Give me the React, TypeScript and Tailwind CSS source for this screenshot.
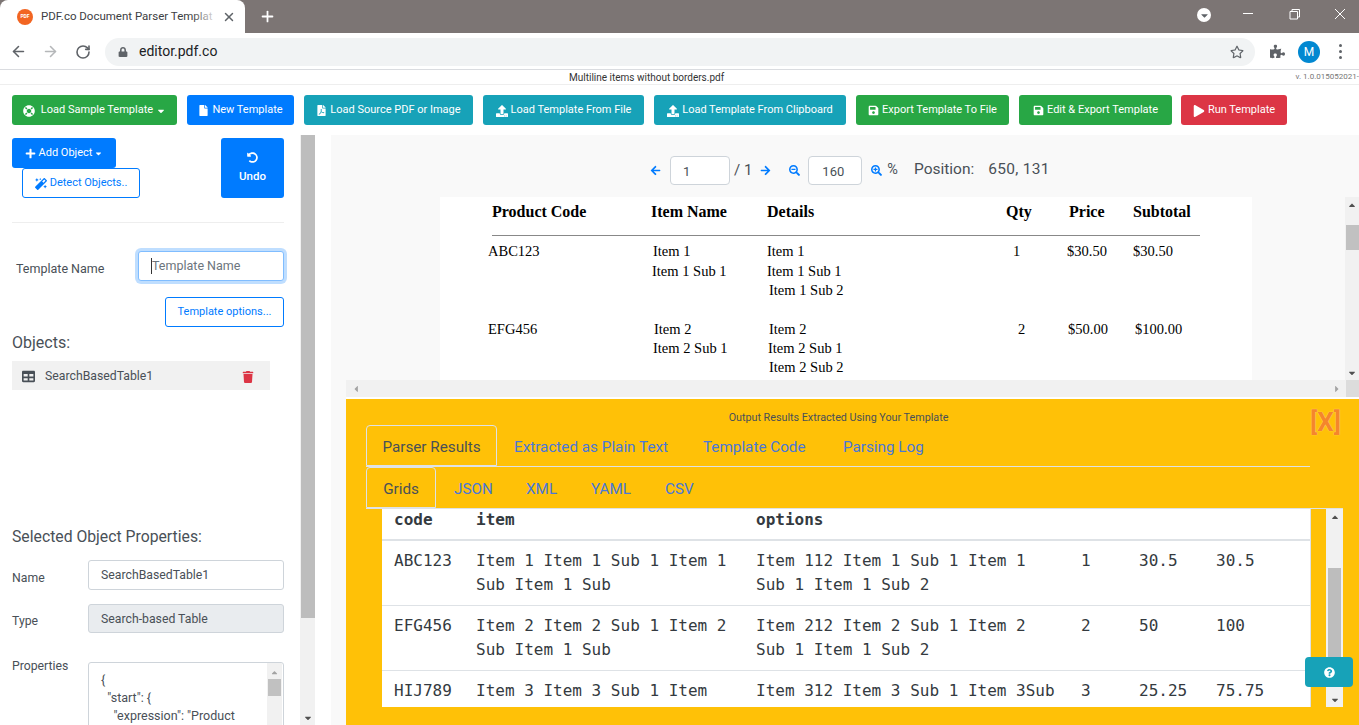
import {
  FaFile,
  FaFilePdf,
  FaLifeRing,
  FaMagic,
  FaPlay,
  FaPlus,
  FaPuzzlePiece,
  FaQuestionCircle,
  FaRegStar,
  FaSave,
  FaSearchMinus,
  FaSearchPlus,
  FaTable,
  FaTrash,
  FaUndoAlt,
  FaUpload,
  FaArrowLeft,
  FaArrowRight,
  FaLock,
  FaCaretDown,
  FaCaretUp,
  FaCaretLeft,
  FaCaretRight,
} from 'react-icons/fa';
import { ArrowLeft, ArrowRight, Plus, RotateCw, X } from 'lucide-react';
import type { ReactNode } from 'react';

const GREEN = 'bg-[#28a745]';
const BLUE = 'bg-[#007bff]';
const TEAL = 'bg-[#17a2b8]';
const RED = 'bg-[#dc3545]';

const toolbarButtons: { label: string; icon: ReactNode; color: string; width: string; caret?: boolean }[] = [
  { label: 'Load Sample Template', icon: <FaLifeRing className="mr-[6px] text-[12px]" />, color: GREEN, width: 'w-[165px]', caret: true },
  { label: 'New Template', icon: <FaFile className="mr-[3px] text-[11px]" />, color: BLUE, width: 'w-[107px]' },
  { label: 'Load Source PDF or Image', icon: <FaFilePdf className="mr-[3px] text-[11px]" />, color: TEAL, width: 'w-[169px]' },
  { label: 'Load Template From File', icon: <FaUpload className="mr-[3px] text-[12px]" />, color: TEAL, width: 'w-[161px]' },
  { label: 'Load Template From Clipboard', icon: <FaUpload className="mr-[3px] text-[12px]" />, color: TEAL, width: 'w-[192px]' },
  { label: 'Export Template To File', icon: <FaSave className="mr-[3px] text-[11px]" />, color: GREEN, width: 'w-[153px]' },
  { label: 'Edit & Export Template', icon: <FaSave className="mr-[3px] text-[11px]" />, color: GREEN, width: 'w-[153px]' },
  { label: 'Run Template', icon: <FaPlay className="mr-[3px] text-[12px]" />, color: RED, width: 'w-[106px]' },
];

// text sits at fixed spots on the rendered PDF page
const pdfHeader = [
  { text: 'Product Code', pos: 'left-[52px] top-[7px]' },
  { text: 'Item Name', pos: 'left-[211px] top-[7px]' },
  { text: 'Details', pos: 'left-[327px] top-[7px]' },
  { text: 'Qty', pos: 'left-[566px] top-[7px]' },
  { text: 'Price', pos: 'left-[629px] top-[7px]' },
  { text: 'Subtotal', pos: 'left-[693px] top-[7px]' },
];

const pdfCells = [
  { text: 'ABC123', pos: 'left-[48px] top-[46px]' },
  { text: 'Item 1', pos: 'left-[213px] top-[46px]' },
  { text: 'Item 1 Sub 1', pos: 'left-[212px] top-[66px]' },
  { text: 'Item 1', pos: 'left-[327px] top-[46px]' },
  { text: 'Item 1 Sub 1', pos: 'left-[327px] top-[66px]' },
  { text: 'Item 1 Sub 2', pos: 'left-[329px] top-[85px]' },
  { text: '1', pos: 'left-[573px] top-[46px]' },
  { text: '$30.50', pos: 'left-[627px] top-[46px]' },
  { text: '$30.50', pos: 'left-[693px] top-[46px]' },
  { text: 'EFG456', pos: 'left-[48px] top-[124px]' },
  { text: 'Item 2', pos: 'left-[214px] top-[124px]' },
  { text: 'Item 2 Sub 1', pos: 'left-[213px] top-[143px]' },
  { text: 'Item 2', pos: 'left-[329px] top-[124px]' },
  { text: 'Item 2 Sub 1', pos: 'left-[328px] top-[143px]' },
  { text: 'Item 2 Sub 2', pos: 'left-[329px] top-[162px]' },
  { text: '2', pos: 'left-[578px] top-[124px]' },
  { text: '$50.00', pos: 'left-[628px] top-[124px]' },
  { text: '$100.00', pos: 'left-[695px] top-[124px]' },
];

const gridRows = [
  { code: 'ABC123', item: ['Item 1 Item 1 Sub 1 Item 1', 'Sub Item 1 Sub'], options: ['Item 112 Item 1 Sub 1 Item 1', 'Sub 1 Item 1 Sub 2'], qty: '1', price: '30.5', total: '30.5' },
  { code: 'EFG456', item: ['Item 2 Item 2 Sub 1 Item 2', 'Sub Item 1 Sub'], options: ['Item 212 Item 2 Sub 1 Item 2', 'Sub 1 Item 1 Sub 2'], qty: '2', price: '50', total: '100' },
  { code: 'HIJ789', item: ['Item 3 Item 3 Sub 1 Item'], options: ['Item 312 Item 3 Sub 1 Item 3Sub'], qty: '3', price: '25.25', total: '75.75' },
];

const BrowserChrome = () => (
  <div className="shrink-0">
    <div className="relative flex h-[33px] items-end bg-[#7c7574]">
      <div className="relative flex h-[33px] w-[245px] items-center rounded-t-[8px] bg-white pl-[17px] pr-[9px]">
        <div className="flex h-4 w-4 shrink-0 items-center justify-center rounded-full bg-[#f26522] text-[5px] font-bold text-white">
          PDF
        </div>
        <span className="ml-2 w-[177px] text-[11.5px] whitespace-nowrap text-[#3c4043]">
          PDF.co Document Parser Templat
        </span>
        <div className="absolute top-0 left-[192px] h-full w-[26px] bg-gradient-to-r from-white/0 to-white" />
        <X className="ml-1 h-[14px] w-[14px] text-[#5f6368]" strokeWidth={2.5} />
      </div>
      <Plus className="ml-[14px] mb-[8px] h-[17px] w-[17px] text-white" strokeWidth={2.5} />
      <div className="absolute top-2 left-[1197px] flex h-[14px] w-[14px] items-center justify-center rounded-full bg-white">
        <FaCaretDown className="text-[11px] text-[#5f6368]" />
      </div>
      <svg className="absolute top-[6px] left-[1240px]" width="110" height="20" viewBox="0 0 110 20" fill="none" stroke="#fff" strokeWidth="1">
        <path d="M3 7.5h10" />
        <path d="M50 5.5h7.5v7.5h-7.5zM52 5.5v-2h7.5v7.5h-2" />
        <path d="M95 3l10 10M105 3l-10 10" />
      </svg>
    </div>
    <div className="flex h-[37px] items-center border-b border-[#dadce0] bg-white pt-px">
      <ArrowLeft className="ml-[10px] h-[17px] w-[17px] text-[#5f6368]" strokeWidth={2.2} />
      <ArrowRight className="ml-[15px] h-[17px] w-[17px] text-[#b5b7b9]" strokeWidth={2.2} />
      <RotateCw className="ml-[16px] h-[16px] w-[16px] text-[#5f6368]" strokeWidth={2.4} />
      <div className="ml-[14px] flex h-7 w-[1150px] items-center rounded-full bg-[#f1f3f4] pl-[13px]">
        <FaLock className="text-[10px] text-[#5f6368]" />
        <span className="ml-[11px] text-[14px] text-[#202124]">editor.pdf.co</span>
        <FaRegStar className="mr-[11px] ml-auto text-[14px] text-[#5f6368]" />
      </div>
      <FaPuzzlePiece className="ml-[15px] text-[15px] text-[#5f6368]" />
      <div className="ml-[13px] flex h-[22px] w-[22px] items-center justify-center rounded-full bg-[#0288d1] text-[12px] text-white">
        M
      </div>
      <div className="ml-[19px] flex flex-col gap-[3px]">
        <span className="h-[3px] w-[3px] rounded-full bg-[#5f6368]" />
        <span className="h-[3px] w-[3px] rounded-full bg-[#5f6368]" />
        <span className="h-[3px] w-[3px] rounded-full bg-[#5f6368]" />
      </div>
    </div>
  </div>
);

const Toolbar = () => (
  <div className="flex h-[50px] shrink-0 gap-[10px] px-3 pt-[10px]">
    {toolbarButtons.map((b, i) => (
      <button
        key={b.label}
        className={`flex h-[30px] items-center justify-center rounded-[3px] pt-px whitespace-nowrap text-[11px] text-white ${b.color} ${b.width} ${i === 7 ? '-ml-px' : ''}`}
      >
        {b.icon}
        {b.label}
        {b.caret && <FaCaretDown className="ml-[3px] text-[10px]" />}
      </button>
    ))}
  </div>
);

const Sidebar = () => (
  <div className="relative w-[300px] shrink-0 overflow-hidden text-[#495057]">
    <div className="flex h-[63px] pt-[3px] pl-3">
      <div className="w-[209px]">
        <button className={`flex h-[30px] w-[104px] items-center justify-center rounded-[3px] pt-px text-[11px] text-white ${BLUE}`}>
          <FaPlus className="mr-[3px] text-[11px]" />
          Add Object
          <FaCaretDown className="ml-[2px] text-[9px]" />
        </button>
        <button className="ml-[10px] flex h-[30px] w-[118px] items-center justify-center rounded-[3px] border border-[#007bff] bg-white pt-px text-[11px] text-[#007bff]">
          <FaMagic className="mr-[3px] text-[12px]" />
          Detect Objects..
        </button>
      </div>
      <button className={`flex h-[60px] w-[63px] flex-col items-center justify-center rounded-[3px] pt-[2px] text-[11.5px] font-medium text-white ${BLUE}`}>
        <FaUndoAlt className="mb-[5px] text-[11px]" />
        Undo
      </button>
    </div>
    <div className="mx-3 mt-[24px] h-px w-[272px] bg-[#eeeeee]" />
    <div className="mt-[28px] flex items-center pl-4">
      <span className="w-[122px] pt-[7px] text-[12.5px]">Template Name</span>
      <div className="flex h-[30px] w-[146px] items-center rounded-[3px] border border-[#80bdff] bg-white pl-3 text-[12.5px] text-[#6c757d] shadow-[0_0_0_3px_rgba(0,123,255,0.25)]">
        <span className="h-[16px] w-px bg-[#333]" />
        Template Name
      </div>
    </div>
    <button className="mt-[16px] ml-[165px] flex h-[30px] w-[119px] items-center justify-center rounded-[3px] border border-[#007bff] bg-white pt-px text-[11px] text-[#007bff]">
      Template options...
    </button>
    <div className="mt-[5px] pl-3 text-[16px] leading-[22px]">Objects:</div>
    <div className="mt-[7px] ml-3 flex h-[29px] w-[258px] items-center bg-[#f1f1f1] pt-[2px] pl-[10px] text-[12.25px]">
      <FaTable className="text-[13px] text-[#495057]" />
      <span className="ml-[10px]">SearchBasedTable1</span>
      <FaTrash className="ml-auto mr-[16px] text-[12px] text-[#dc3545]" />
    </div>
    <div className="mt-[136px] pl-3 text-[15.75px] leading-[22px]">Selected Object Properties:</div>
    <div className="mt-[12px] flex items-center pl-3 text-[12.25px]">
      <span className="w-[76px] pt-[6px]">Name</span>
      <div className="flex h-[30px] w-[196px] items-center rounded-[3px] border border-[#ced4da] bg-white pt-px pl-3">SearchBasedTable1</div>
    </div>
    <div className="mt-[14px] flex items-center pl-3 text-[12.25px]">
      <span className="w-[76px] pt-[6px]">Type</span>
      <div className="flex h-[29px] w-[196px] items-center rounded-[3px] border border-[#ced4da] bg-[#e9ecef] pt-[2px] pl-3">Search-based Table</div>
    </div>
    <div className="mt-[29px] flex pl-3 text-[12.25px]">
      <span className="w-[76px] leading-[8px]">Properties</span>
      <div className="relative h-[100px] w-[196px] rounded-[3px] border border-[#ced4da] bg-white pt-[8px] pl-3 text-[12.5px] leading-[18px] whitespace-pre">
        <div>{'{'}</div>
        <div>{'  "start": {'}</div>
        <div>{'    "expression": "Product'}</div>
        <div className="absolute top-0 right-[1px] flex h-full w-[15px] flex-col items-center bg-[#f1f1f1]">
          <FaCaretUp className="mt-[5px] text-[9px] text-[#a3a3a3]" />
          <div className="mt-[2px] h-[17px] w-[13px] bg-[#c1c1c1]" />
        </div>
      </div>
    </div>
  </div>
);

const SidebarScrollbar = () => (
  <div className="flex w-[15px] shrink-0 flex-col items-center bg-[#f1f1f1]">
    <div className="h-[483px] w-[14px] bg-[#bdbdbd]" />
    <FaCaretDown className="mt-auto mb-[2px] text-[10px] text-[#505050]" />
  </div>
);

const PdfPager = () => (
  <div className="flex h-[62px] items-center pt-[8px] pl-[319px] text-[#495057]">
    <FaArrowLeft className="text-[11px] text-[#007bff]" />
    <div className="ml-[9px] flex h-[29px] w-[60px] items-center rounded-[4px] border border-[#ced4da] bg-white pt-[3px] pl-[12px] text-[13px]">1</div>
    <span className="ml-[4px] text-[15px]">/ 1</span>
    <FaArrowRight className="ml-[8px] text-[11px] text-[#007bff]" />
    <FaSearchMinus className="ml-[18px] text-[11px] text-[#007bff]" />
    <div className="ml-[8px] flex h-[29px] w-[54px] items-center rounded-[4px] border border-[#ced4da] bg-white pt-[3px] pl-[13px] text-[13px]">160</div>
    <FaSearchPlus className="ml-[9px] text-[11px] text-[#007bff]" />
    <span className="ml-[5px] text-[14.5px]">%</span>
    <span className="ml-[16px] text-[15.5px]">Position:</span>
    <span className="ml-[14px] text-[15.5px] tracking-[0.3px]">650, 131</span>
  </div>
);

const PdfPage = () => (
  <div className="flex h-[183px]">
    <div className="w-[109px] shrink-0" />
    <div className="relative w-[812px] shrink-0 overflow-hidden bg-white font-['Liberation_Serif',serif] text-[14.5px] leading-[16px] text-black">
      {pdfHeader.map((h) => (
        <span key={h.text} className={`absolute text-[16px] font-bold whitespace-nowrap ${h.pos}`}>
          {h.text}
        </span>
      ))}
      <div className="absolute top-[38px] left-[52px] h-px w-[708px] bg-[#888888]" />
      {pdfCells.map((c) => (
        <span key={c.pos} className={`absolute whitespace-nowrap ${c.pos}`}>
          {c.text}
        </span>
      ))}
    </div>
    <div className="ml-auto flex w-[14px] flex-col items-center bg-[#f1f1f1]">
      <FaCaretUp className="mt-[3px] text-[10px] text-[#505050]" />
      <div className="mt-[15px] h-[25px] w-[13px] bg-[#c1c1c1]" />
      <FaCaretDown className="mt-auto mb-[2px] text-[10px] text-[#505050]" />
    </div>
  </div>
);

const PdfHScroll = () => (
  <div className="flex h-[17px] items-center bg-[#f1f1f1] pl-[5px] text-[#a3a3a3]">
    <FaCaretLeft className="text-[10px]" />
    <FaCaretRight className="mr-[4px] ml-auto text-[10px]" />
    <div className="h-[17px] w-[13px] bg-[#dcdcdc]" />
  </div>
);

const ResultsPanel = () => (
  <div className="relative min-h-0 flex-1 overflow-hidden bg-[#ffc107] pl-5">
    <div className="flex h-[26px] items-end justify-center pr-[48px] text-[10.75px] leading-[14px] text-[#495057]">
      Output Results Extracted Using Your Template
    </div>
    <div className="absolute top-[7px] left-[964px] text-[26px] leading-[32px] font-bold text-[#f5862b] [text-shadow:0_0_1px_#ffe9a8]">
      [X]
    </div>
    <div className="flex h-[42px] w-[944px] border-b border-[#dee2e6] text-[15.25px]">
      <div className="flex h-[41px] w-[131px] items-center justify-center rounded-t-[4px] border border-[#dee2e6] pt-[3px] text-[#495057]">
        Parser Results
      </div>
      <span className="mt-[11px] ml-[17px] w-[189px] text-[#4a78d8]">Extracted as Plain Text</span>
      <span className="mt-[11px] w-[140px] text-[#4a78d8]">Template Code</span>
      <span className="mt-[11px] text-[#4a78d8]">Parsing Log</span>
    </div>
    <div className="flex h-[42px] w-[977px] border-b border-[#dee2e6] text-[15.25px]">
      <div className="flex h-[41px] w-[70px] items-center justify-center rounded-t-[4px] border border-[#dee2e6] pt-[3px] text-[#495057]">
        Grids
      </div>
      <span className="mt-[11px] ml-[18px] w-[72px] text-[#4a78d8]">JSON</span>
      <span className="mt-[11px] w-[65px] text-[#4a78d8]">XML</span>
      <span className="mt-[11px] w-[74px] text-[#4a78d8]">YAML</span>
      <span className="mt-[11px] text-[#4a78d8]">CSV</span>
    </div>
    <div className="flex h-[198px]">
      <div className="ml-[16px] w-[929px] overflow-hidden border-r border-[#dee2e6] bg-white font-['DejaVu_Sans_Mono',monospace] text-[16px] leading-[24px] text-[#343a40]">
        <div className="grid h-[30px] grid-cols-[82px_280px_325px] pt-px pl-3 leading-[20px] font-bold">
          <span>code</span>
          <span>item</span>
          <span>options</span>
        </div>
        {gridRows.map((r, i) => (
          <div
            key={r.code}
            className={`grid grid-cols-[82px_280px_325px_58px_77px_1fr] pt-[8px] pb-[8px] pl-3 ${i === 0 ? 'border-t-2 border-[#dee2e6]' : 'border-t border-[#dee2e6]'}`}
          >
            <span>{r.code}</span>
            <div>
              {r.item.map((line) => (
                <div key={line} className="whitespace-pre">{line}</div>
              ))}
            </div>
            <div>
              {r.options.map((line) => (
                <div key={line} className="whitespace-pre">{line}</div>
              ))}
            </div>
            <span>{r.qty}</span>
            <span>{r.price}</span>
            <span>{r.total}</span>
          </div>
        ))}
      </div>
      <div className="ml-[15px] flex w-[17px] flex-col items-center bg-[#f1f1f1]">
        <FaCaretUp className="mt-[3px] text-[10px] text-[#505050]" />
        <div className="mt-[46px] h-[100px] w-[13px] bg-[#bdbdbd]" />
        <FaCaretDown className="mt-auto mb-[2px] text-[10px] text-[#505050]" />
      </div>
    </div>
  </div>
);

export default function App() {
  return (
    <div className="relative flex h-[725px] w-[1359px] flex-col overflow-hidden bg-white font-['Roboto',sans-serif]">
      <BrowserChrome />
      <div className="flex h-[15px] shrink-0 items-center justify-between border-b border-[#eeeeee] pl-[569px] text-[10px] text-[#333]">
        <span>Multiline items without borders.pdf</span>
        <span className="text-[8px] whitespace-nowrap text-[#777]">v. 1.0.015052021-</span>
      </div>
      <Toolbar />
      <div className="flex min-h-0 flex-1">
        <Sidebar />
        <SidebarScrollbar />
        <div className="ml-4 flex min-w-0 flex-1 flex-col bg-[#f9f9f9]">
          <PdfPager />
          <div className="ml-[15px] flex min-h-0 flex-1 flex-col">
            <div className="-ml-[15px]">
              <PdfPage />
            </div>
            <PdfHScroll />
            <div className="h-[2px] shrink-0 bg-white" />
            <ResultsPanel />
          </div>
        </div>
      </div>
      <button className="absolute top-[657px] left-[1305px] flex h-[30px] w-[48px] items-center justify-center rounded-[4px] bg-[#17a2b8] text-[11px] text-white">
        <FaQuestionCircle />
      </button>
    </div>
  );
}
